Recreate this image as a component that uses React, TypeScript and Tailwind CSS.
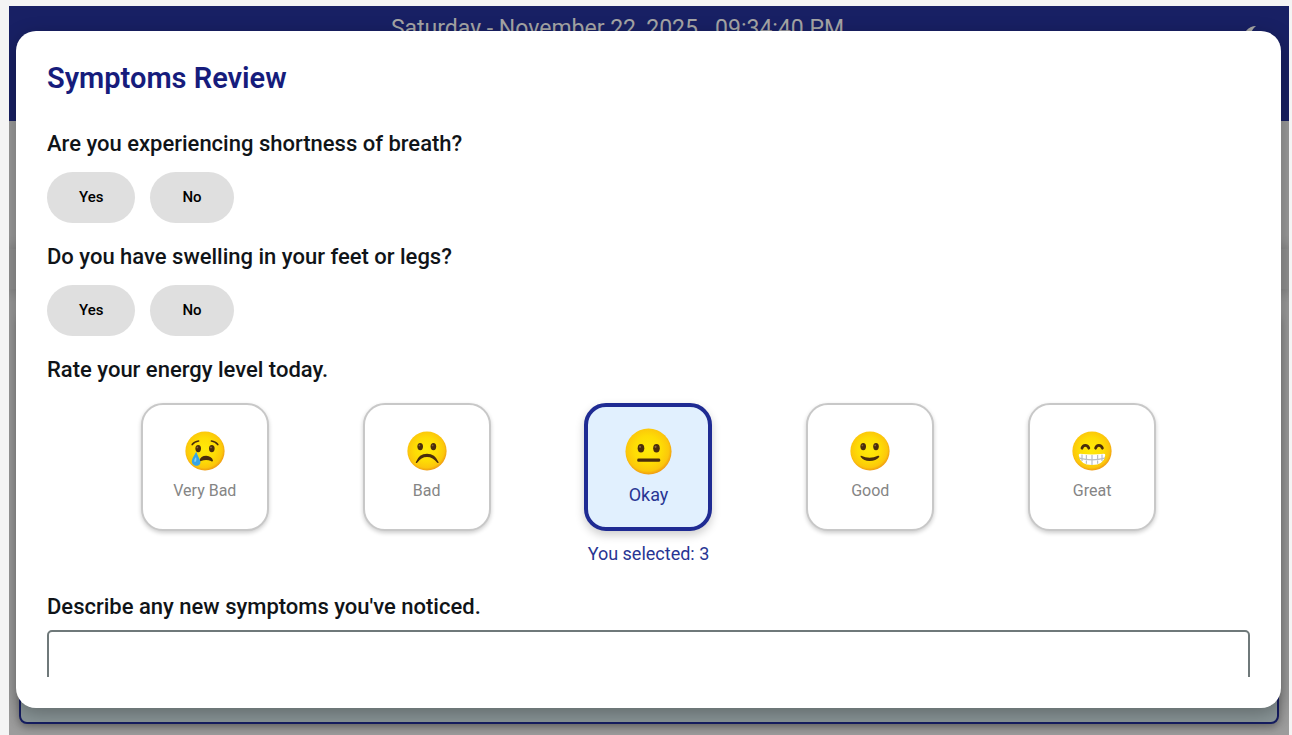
import { useState } from "react";
import type { ReactNode } from "react";
import { clsx } from "clsx";

const ink = "#4a2d0c";

function Face({ id, children }: { id: string; children: ReactNode }) {
  return (
    <svg viewBox="0 0 100 100" className="size-full" aria-hidden="true">
      <defs>
        <radialGradient id={id} cx="48%" cy="46%" r="54%">
          <stop offset="0" stopColor="#ffea08" />
          <stop offset="0.55" stopColor="#fedc05" />
          <stop offset="0.86" stopColor="#fcc70b" />
          <stop offset="1" stopColor="#ef9a12" />
        </radialGradient>
      </defs>
      <circle cx="50" cy="50" r="49" fill={`url(#${id})`} />
      {children}
    </svg>
  );
}

function Eye({ x, y, rx = 7, ry = 9 }: { x: number; y: number; rx?: number; ry?: number }) {
  return (
    <>
      <ellipse cx={x} cy={y} rx={rx} ry={ry} fill={ink} />
      <ellipse cx={x - 2} cy={y - 3} rx="2.2" ry="2.4" fill="#8a6540" />
    </>
  );
}

const moods = [
  {
    value: 1,
    label: "Very Bad",
    face: (
      <Face id="mood-very-bad">
        <Eye x={33} y={44} ry={9} />
        <Eye x={67} y={44} ry={9} />
        <path d="M18 34Q24 26 34 25M82 34Q76 26 66 25" fill="none" stroke={ink} strokeWidth="4" strokeLinecap="round" />
        <path d="M36 74Q39 62 53 62Q67 63 70 74Q69 78 65 75Q53 70 40 75Q36 77 36 74Z" fill={ink} />
        <path d="M28 52C24 61 17 69 17 75C17 83 23 87 29 87C35 87 40 83 38 75C36 68 31 61 28 52Z" fill="#36a4e8" />
        <path d="M26 66Q21 73 24 78Q30 76 28 66Z" fill="#83d2fb" />
      </Face>
    ),
  },
  {
    value: 2,
    label: "Bad",
    face: (
      <Face id="mood-bad">
        <Eye x={33} y={39} />
        <Eye x={66} y={39} />
        <path d="M22 78Q30 57 50 57Q70 57 79 78Q79 82 75 79Q65 65 50 65Q35 65 26 79Q22 82 22 78Z" fill={ink} />
      </Face>
    ),
  },
  {
    value: 3,
    label: "Okay",
    face: (
      <Face id="mood-okay">
        <Eye x={34} y={43} />
        <Eye x={67} y={43} />
        <rect x="26" y="65" width="49" height="7" rx="3" fill={ink} />
      </Face>
    ),
  },
  {
    value: 4,
    label: "Good",
    face: (
      <Face id="mood-good">
        <Eye x={33} y={39} />
        <Eye x={65} y={39} />
        <path d="M28 62Q49 72 70 62Q74 61 73 65Q65 75 49 75Q34 75 27 65Q25 61 28 62Z" fill={ink} />
      </Face>
    ),
  },
  {
    value: 5,
    label: "Great",
    face: (
      <Face id="mood-great">
        <path d="M25 43Q27 36 33 36Q40 36 42 43M59 43Q61 36 67 36Q74 36 76 43" fill="none" stroke={ink} strokeWidth="7" strokeLinecap="round" />
        <path d="M20 57Q50 61 80 57Q84 57 83 61Q79 85 50 85Q21 85 17 61Q16 57 20 57Z" fill="#fff" />
        <path d="M18 68Q50 76 82 68M50 60V85M36 60V82M64 60V82M25 59V75M75 59V75" fill="none" stroke="#b9bec4" strokeWidth="3" />
      </Face>
    ),
  },
];

function YesNo({ question }: { question: string }) {
  const [answer, setAnswer] = useState<string | null>(null);
  return (
    <fieldset>
      <legend className="text-[22px] leading-[30px] font-medium">{question}</legend>
      <div className="mt-[13px] flex gap-[15px]">
        {["Yes", "No"].map((option) => (
          <button
            key={option}
            type="button"
            aria-pressed={answer === option}
            onClick={() => setAnswer(option)}
            className={clsx(
              "h-[51px] rounded-full px-8 text-[15px] font-medium",
              answer === option ? "bg-[#1a237e] text-white" : "bg-[#dfdfdf] text-black",
            )}
          >
            {option}
          </button>
        ))}
      </div>
    </fieldset>
  );
}

function EnergyRating() {
  const [rating, setRating] = useState(3);
  return (
    <fieldset>
      <legend className="text-[22px] leading-[30px] font-medium">Rate your energy level today.</legend>
      <div className="mt-[18px] flex justify-evenly">
        {moods.map(({ value, label, face }) => {
          const selected = value === rating;
          return (
            <button
              key={value}
              type="button"
              aria-pressed={selected}
              onClick={() => setRating(value)}
              className={clsx(
                "flex size-32 flex-col items-center rounded-[22px]",
                selected
                  ? "gap-2 border-4 border-[#1f2b93] bg-[#e1f0fe] pt-5 text-lg leading-6 text-[#283593] shadow-[0_4px_10px_rgba(0,0,0,0.2)]"
                  : "gap-1 border-2 border-[#c8c8c8] bg-white pt-[22px] text-base leading-6 text-[#858585] shadow-[0_2px_4px_rgba(0,0,0,0.2)]",
              )}
            >
              <span className="flex h-12 items-center">
                <span className={selected ? "size-[47px]" : "size-[40px]"}>{face}</span>
              </span>
              {label}
            </button>
          );
        })}
      </div>
      <p className="mt-[11px] text-center text-lg leading-6 text-[#283593]">You selected: {rating}</p>
    </fieldset>
  );
}

export default function App() {
  return (
    <div className="h-screen overflow-hidden bg-[#f4f4f4] pt-[6px] pr-[3px] pl-[9px] font-[Roboto,sans-serif]">
      <div className="relative flex h-full flex-col overflow-hidden bg-[#9c9c9c]">
        <header className="flex h-[115px] shrink-0 items-start gap-2 bg-[#182064] pt-2 pr-[31px] text-[23px] leading-[30px] text-[#a5a5a5]">
          <p className="flex-1 text-center whitespace-pre">Saturday - November 22, 2025   09:34:40 PM</p>
          <svg viewBox="0 0 24 24" className="mt-3 size-6" aria-hidden="true">
            <path d="M22 0Q16 0 12 5Q7 12 12 19Q17 24 24 21Q17 16 17 9Q17 4 22 0Z" fill="#a8a8a4" />
          </svg>
        </header>
        <div className="mt-32 h-10 shrink-0 bg-[#929292] shadow-[0_0_10px_4px_rgba(0,0,0,0.12)]" />
        <div className="mx-[10px] mt-6 mb-[11px] flex-1 rounded-lg border-2 border-[#151d62] bg-[#8b9799] shadow-[0_3px_8px_rgba(0,0,0,0.35)]" />

        <div className="absolute inset-0 flex pt-[25px] pr-2 pb-[27px] pl-[7px]">
          <section
            role="dialog"
            aria-labelledby="review-title"
            className="flex min-w-0 flex-1 flex-col rounded-[20px] bg-white p-[31px] text-[#101418] shadow-[0_6px_20px_rgba(0,0,0,0.3)]"
          >
            <h1 id="review-title" className="text-[29px] leading-8 font-semibold text-[#161c7c]">
              Symptoms Review
            </h1>
            <form className="mt-[35px] flex min-h-0 flex-1 flex-col gap-[19px] overflow-y-auto [scrollbar-width:none]">
              <YesNo question="Are you experiencing shortness of breath?" />
              <YesNo question="Do you have swelling in your feet or legs?" />
              <EnergyRating />
              <div className="mt-[7px] flex flex-col gap-2">
                <label htmlFor="new-symptoms" className="text-[22px] leading-[30px] font-medium">
                  Describe any new symptoms you've noticed.
                </label>
                <textarea
                  id="new-symptoms"
                  className="h-32 w-full shrink-0 resize-none rounded-[5px] border-2 border-[#6f797a] p-4 text-lg outline-none"
                />
              </div>
            </form>
          </section>
        </div>
      </div>
    </div>
  );
}
